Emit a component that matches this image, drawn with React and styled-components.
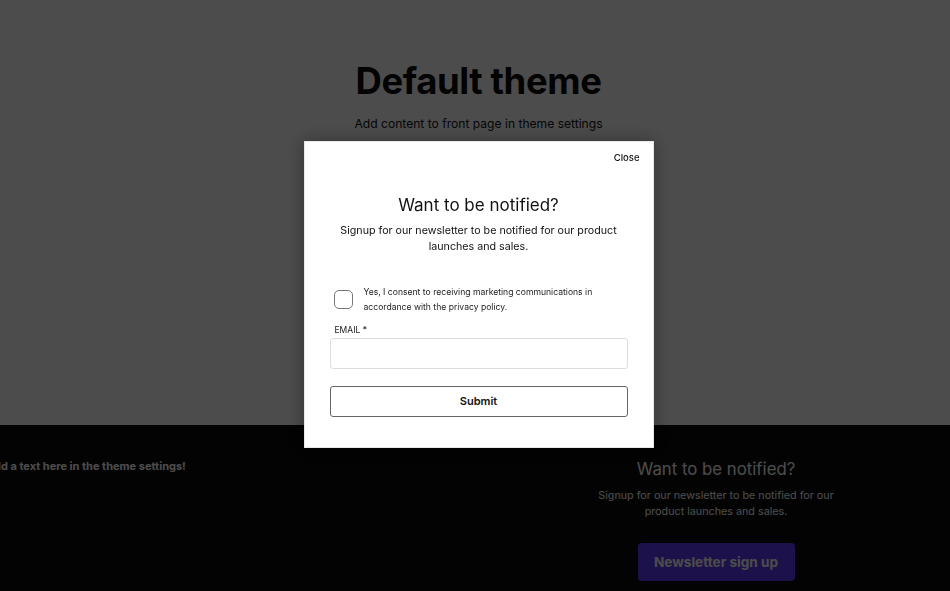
import styled, { createGlobalStyle } from "styled-components";

const GlobalStyle = createGlobalStyle`
    html, body {
        margin: 0;
        padding: 0;
        background: #ffffff;
        font-family: Inter, "Liberation Sans", sans-serif;
        overflow: hidden;
    }
    * {
        box-sizing: border-box;
    }
`

export default function App() {
    return (
        <>
            <GlobalStyle/>
            <SCPage>
                <SCHero>
                    <h1>Default theme</h1>
                    <p>Add content to front page in theme settings</p>
                </SCHero>
                <SCFooter>
                    <SCFooterLeft>Add a text here in the theme settings!</SCFooterLeft>
                    <SCFooterRight>
                        <h2>Want to be notified?</h2>
                        <p>Signup for our newsletter to be notified for our product launches and sales.</p>
                        <SCNewsletterButton>Newsletter sign up</SCNewsletterButton>
                    </SCFooterRight>
                </SCFooter>
            </SCPage>
            <SCOverlay>
                <SCModal>
                    <SCClose>Close</SCClose>
                    <SCModalTitle>Want to be notified?</SCModalTitle>
                    <SCModalText>Signup for our newsletter to be notified for our product launches and sales.</SCModalText>
                    <SCConsent>
                        <SCCheckbox type="checkbox"/>
                        <span>Yes, I consent to receiving marketing communications in accordance with the privacy policy.</span>
                    </SCConsent>
                    <SCLabel>EMAIL *</SCLabel>
                    <SCInput type="email"/>
                    <SCSubmit>Submit</SCSubmit>
                </SCModal>
            </SCOverlay>
        </>
    )
}

const SCPage = styled.div`
    display: flex;
    flex-direction: column;
    width: 100%;
    min-height: 100vh;
    padding-left: 7px;
    background: #ffffff;
`

const SCHero = styled.div`
    display: flex;
    flex-direction: column;
    align-items: center;
    height: 425px;
    padding-top: 58px;

    h1 {
        margin: 0;
        font-size: 36.5px;
        font-weight: 700;
        line-height: 46px;
        letter-spacing: -0.4px;
        color: #0a0a0a;
    }

    p {
        margin: 11px 0 0;
        font-size: 12.1px;
        line-height: 18px;
        color: #111111;
    }
`

const SCFooter = styled.div`
    display: grid;
    grid-template-columns: 1fr 1fr;
    flex: 1;
    margin-left: -7px;
    background: #0a0a0a;
    overflow: hidden;
`

const SCFooterLeft = styled.p`
    margin: 33px 0 0 -14px;
    font-size: 11px;
    font-weight: 700;
    line-height: 16px;
    color: #ffffff;
    white-space: nowrap;
`

const SCFooterRight = styled.div`
    display: flex;
    flex-direction: column;
    align-items: center;
    padding: 32px 0 0 7px;

    h2 {
        margin: 0;
        font-size: 16.8px;
        font-weight: 400;
        line-height: 24px;
        color: #ffffff;
    }

    p {
        margin: 7px 0 0;
        width: 250px;
        font-size: 10.75px;
        line-height: 16px;
        text-align: center;
        color: #ffffff;
    }
`

const SCNewsletterButton = styled.button`
    margin-top: 23px;
    width: 157px;
    height: 38px;
    border: none;
    border-radius: 4px;
    background: #5e3af7;
    color: #ffffff;
    font-family: Inter, "Liberation Sans", sans-serif;
    font-size: 13.6px;
    font-weight: 700;
`

const SCOverlay = styled.div`
    position: fixed;
    inset: 0;
    display: flex;
    align-items: center;
    justify-content: center;
    padding-left: 7px;
    padding-bottom: 3px;
    background: rgba(0, 0, 0, 0.7);
`

const SCModal = styled.div`
    display: flex;
    flex-direction: column;
    width: 350px;
    height: 307px;
    padding: 10px 25px 0;
    background: #ffffff;
    border: 1px solid #e8e8e8;
    box-shadow: 0 0 18px rgba(0, 0, 0, 0.35);
`

const SCClose = styled.button`
    align-self: flex-end;
    margin-right: -12px;
    padding: 0;
    border: none;
    background: none;
    font-family: Inter, "Liberation Sans", sans-serif;
    font-size: 9.5px;
    font-weight: 500;
    line-height: 12px;
    color: #111111;
`

const SCModalTitle = styled.h3`
    margin: 29px 0 0;
    font-size: 17px;
    font-weight: 400;
    line-height: 24px;
    text-align: center;
    color: #111111;
`

const SCModalText = styled.p`
    margin: 6px auto 0;
    width: 285px;
    font-size: 10.7px;
    line-height: 16px;
    text-align: center;
    color: #111111;
`

const SCConsent = styled.label`
    display: flex;
    align-items: center;
    gap: 11px;
    margin-top: 30px;
    padding-left: 4px;

    span {
        font-size: 8.6px;
        line-height: 15px;
        color: #222222;
    }
`

const SCCheckbox = styled.input`
    flex-shrink: 0;
    appearance: none;
    margin: 0;
    width: 19px;
    height: 19px;
    border: 1px solid #777777;
    border-radius: 5px;
    background: #ffffff;
`

const SCLabel = styled.label`
    margin-top: 9px;
    padding-left: 5px;
    font-size: 8.5px;
    line-height: 12px;
    color: #222222;
`

const SCInput = styled.input`
    margin-top: 2px;
    width: 100%;
    height: 31px;
    border: 1px solid #dddddd;
    border-radius: 3px;
    background: #ffffff;
`

const SCSubmit = styled.button`
    margin-top: 17px;
    width: 100%;
    height: 31px;
    border: 1px solid #666666;
    border-radius: 3px;
    background: #ffffff;
    font-family: Inter, "Liberation Sans", sans-serif;
    font-size: 11px;
    font-weight: 600;
    color: #111111;
`
